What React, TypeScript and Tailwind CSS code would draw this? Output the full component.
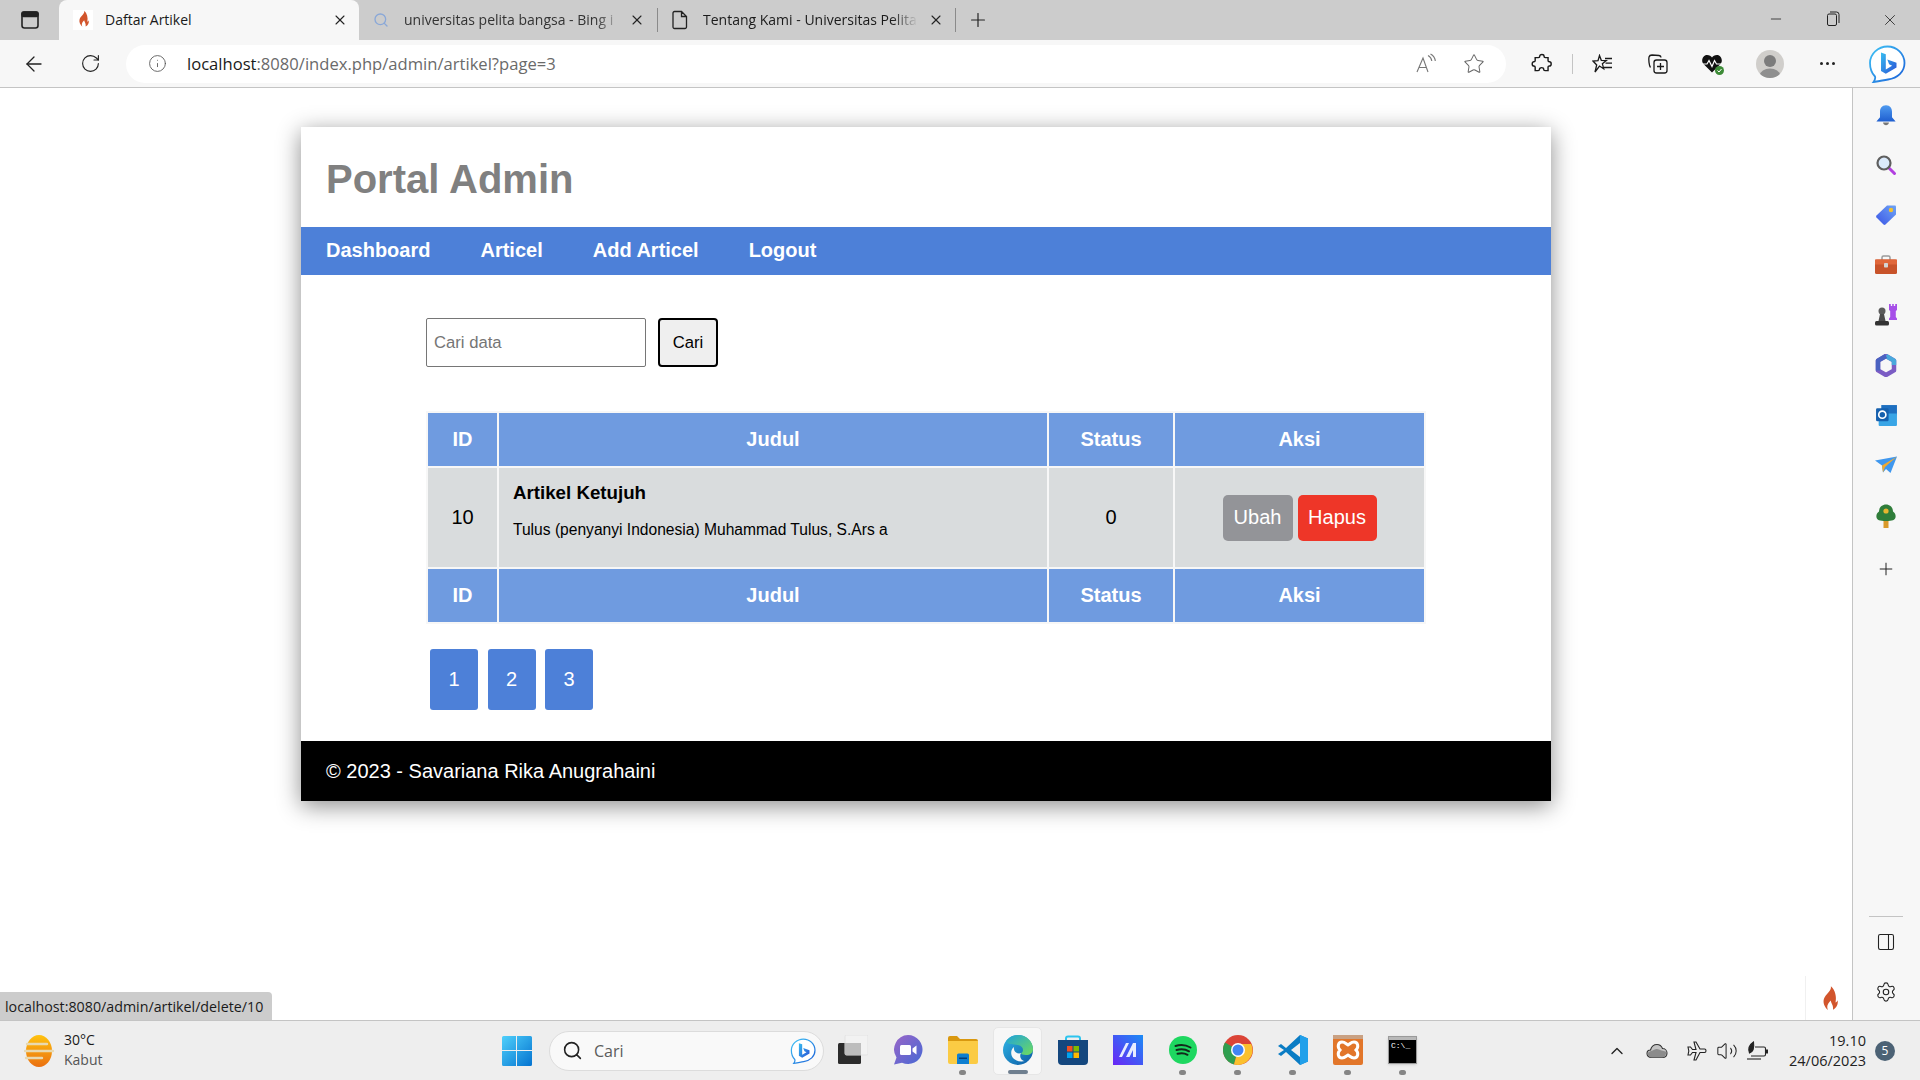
import { ArrowLeft, ChevronUp, Info, Minus, PanelRight, Plus, RotateCw, Search, Settings, Star, Volume2, X } from 'lucide-react';

const uiFont = 'font-["Open_Sans",sans-serif]';

const Flame = ({ size = 22 }: { size?: number }) => (
  <svg width={size} height={size} viewBox="0 0 20 24">
    <path
      fill="#d2552c"
      d="M11.500 1c.8 4-4.300 6-5.600 10.200-.9 3 .6 6.600 3.300 8.800-1.500-3.300.3-5.500 2.200-7.600.2 2.200 2.300 3.600 1.800 7.400 2.800-1.500 4.300-4.500 3.700-7.600-.3 1-1 1.600-1.700 1.800C16.200 9.500 15 4 11.500 1z"
    />
  </svg>
);

const BingLogo = ({ size = 38 }: { size?: number }) => (
  <svg width={size} height={size} viewBox="0 0 38 38">
    <defs>
      <linearGradient id="bingRing" x1="0" y1="0" x2="1" y2="1">
        <stop offset="0" stopColor="#3fc3f5" />
        <stop offset="1" stopColor="#1a5fd8" />
      </linearGradient>
      <linearGradient id="bingB" x1="0" y1="0" x2="1" y2="1">
        <stop offset="0" stopColor="#37bdf0" />
        <stop offset="1" stopColor="#2a52d6" />
      </linearGradient>
    </defs>
    <path
      d="M19.500 1.500C29 1.500 36.500 9 36.500 18S29.500 33 20 34.500c-4 .6-9 1.500-14.500 2.500 1.500-2 2-4 1.500-5.500C3.500 28 2 23 2 18 2 9 10 1.500 19.500 1.500z"
      fill="#fff"
      stroke="url(#bingRing)"
      strokeWidth="1.800"
    />
    <path
      d="M13 7.500l4.800 1.700v15.200l6.300-3.700-3-1.500-1.800-4.600 9.200 3.200v4.800l-10.700 6.200-4.800-2.700z"
      fill="url(#bingB)"
    />
  </svg>
);

const PageIcon = () => (
  <svg width="18" height="20" viewBox="0 0 18 20" fill="none" stroke="#222" strokeWidth="1.300">
    <path d="M3.500 1.500h7l5 5v10.500a1.500 1.500 0 0 1-1.500 1.500H3.500A1.500 1.500 0 0 1 2 17V3a1.500 1.500 0 0 1 1.500-1.500zM10.500 1.500v5h5" />
  </svg>
);

const TabsIcon = () => (
  <svg width="20" height="20" viewBox="0 0 20 20" fill="none" stroke="#222" strokeWidth="1.600">
    <rect x="2" y="2" width="16" height="16" rx="2.500" />
    <rect x="2" y="2" width="16" height="4.500" rx="1.500" fill="#222" />
  </svg>
);

const RestoreIcon = () => (
  <svg width="14" height="16" viewBox="0 0 14 16" fill="none" stroke="#222" strokeWidth="1">
    <rect x="1.500" y="3" width="9" height="11.500" rx="1.500" />
    <path d="M4 1h6.500A2.500 2.500 0 0 1 13 3.500V12" />
  </svg>
);

const ReadAloudIcon = () => (
  <svg width="22" height="22" viewBox="0 0 22 22" fill="none" stroke="#777" strokeWidth="1.100">
    <path d="M2 19L8 5l5 14M4.200 14.500h7.500" />
    <path d="M13 2.500c2 1 3.500 3 3.800 5.500M15.500 1c3 1.500 4.500 4 4.800 7" />
  </svg>
);

const PuzzleIcon = () => (
  <svg width="22" height="22" viewBox="0 0 20 20" fill="none" stroke="#1a1a1a" strokeWidth="1.300">
    <path d="M8 2.800c0-2 3.800-2 3.800 0 0 1 .2 1.400 1.200 1.400h2.500v2.600c0 1 .5 1.200 1.200 1.200 2.200 0 2.200 3.800 0 3.800-.8 0-1.200.3-1.200 1.200v3h-2.800c-1 0-1.200-.5-1.200-1.200 0-2-3.800-2-3.800 0 0 .8-.3 1.200-1.200 1.200H3.800v-3c0-.8-.4-1.200-1.200-1.200C.6 11.800.6 8 2.600 8c.8 0 1.200-.4 1.200-1.200V4.200h3c.9 0 1.200-.4 1.200-1.400z" />
  </svg>
);

const FavoritesIcon = () => (
  <svg width="22" height="20" viewBox="0 0 22 20" fill="none" stroke="#1a1a1a" strokeWidth="1.300">
    <path d="M7.500 1.500l1.800 4.800 5 .3-3.900 3.200 1.300 4.900-4.200-2.700-4.500 6 1.700-7L1 7l5-.4z" />
    <path d="M13 4.500h7M13.500 9.200h6.500M12 13.500h8" />
  </svg>
);

const CollectionsIcon = () => (
  <svg width="22" height="22" viewBox="0 0 22 22" fill="none" stroke="#1a1a1a" strokeWidth="1.300">
    <path d="M3.500 14.500C2 13 1.500 6 2 4c.4-1.500 1.500-2 3-2l7 .5c1.300.2 2 1 2 2" />
    <rect x="7" y="7" width="13" height="13" rx="2.500" />
    <path d="M13.500 10v7M10 13.500h7" />
  </svg>
);

const HeartIcon = () => (
  <svg width="24" height="24" viewBox="0 0 24 24">
    <path d="M11 20.500L2.500 12C-.5 8.500 2 3 6 3c2.500 0 4 1 5 2.500C12 4 13.500 3 16 3c4 0 6.500 5.500 3.500 9z" fill="#111" />
    <path d="M1 12h5l2-3.500 3 6 2.500-6 2 3.500h6" fill="none" stroke="#fff" strokeWidth="1.200" />
    <circle cx="18.500" cy="18.500" r="4.500" fill="#3d8b37" />
    <path d="M16.500 18.500l1.500 1.500 2.500-3" fill="none" stroke="#fff" strokeWidth="1" />
  </svg>
);

const AvatarIcon = () => (
  <div className="flex h-[28px] w-[28px] items-center justify-center overflow-hidden rounded-full bg-[#d0cecb]">
    <svg width="28" height="28" viewBox="0 0 28 28">
      <circle cx="14" cy="11" r="6" fill="#7c7c7c" />
      <ellipse cx="14" cy="25" rx="10" ry="6.500" fill="#8f8f8f" />
    </svg>
  </div>
);

const SideBell = () => (
  <svg width="24" height="24" viewBox="0 0 20 20" className="mt-[2px]">
    <defs>
      <linearGradient id="bellG" x1="0" y1="0" x2="0" y2="1">
        <stop offset="0" stopColor="#4f9bf0" />
        <stop offset="1" stopColor="#1f5fd0" />
      </linearGradient>
    </defs>
    <path d="M10 1c3.500 0 5 2.500 5 5.500V11l3 3.500H2L5 11V6.500C5 3.500 6.500 1 10 1z" fill="url(#bellG)" />
    <path d="M7.500 15.500h5c-.5 3-4.500 3-5 0z" fill="#777" />
  </svg>
);

const SideSearch = () => (
  <svg width="22" height="22" viewBox="0 0 22 22">
    <path d="M13.500 13.500l6 6" stroke="#b23fe0" strokeWidth="3" strokeLinecap="round" />
    <circle cx="9" cy="9" r="6.500" fill="#dbeafb" stroke="#5f5f5f" strokeWidth="2.200" />
  </svg>
);

const SideTag = () => (
  <svg width="22" height="22" viewBox="0 0 22 22">
    <defs>
      <linearGradient id="tagG" x1="0" y1="1" x2="1" y2="0">
        <stop offset="0" stopColor="#3b55e6" />
        <stop offset="1" stopColor="#6ea4f5" />
      </linearGradient>
    </defs>
    <path d="M12 1.500h8a1 1 0 0 1 1 1v8L10.500 20.500a1.500 1.500 0 0 1-2 0l-7-7a1.500 1.500 0 0 1 0-2z" fill="url(#tagG)" />
    <circle cx="16" cy="6" r="2.200" fill="#f2c230" />
  </svg>
);

const SideTools = () => (
  <svg width="24" height="20" viewBox="0 0 24 20">
    <path d="M8 5V2.500C8 1.700 8.700 1 9.500 1h5c.8 0 1.500.7 1.500 1.500V5" fill="none" stroke="#9a9a9a" strokeWidth="1.500" />
    <rect x="1" y="4.500" width="22" height="14.500" rx="1.500" fill="#c8532a" />
    <rect x="1" y="4.500" width="22" height="5" fill="#e0673a" />
    <rect x="10" y="8" width="4" height="4.500" rx=".8" fill="#d4d4d4" />
  </svg>
);

const SideChess = () => (
  <svg width="24" height="24" viewBox="0 0 24 24">
    <path d="M15 1h1.800v2h1.400V1h1.600v2h1.400V1H23v6l-1.200 1v6l1.200 1.500v1.500h-8v-1.500l1.200-1.500V8L15 7z" fill="#a64fe8" />
    <circle cx="8" cy="8" r="3.500" fill="#5c5c5c" />
    <path d="M6 11h4l1.500 7H4.500z" fill="#4d4d4d" />
    <rect x="1" y="18" width="14" height="4.500" rx="1.500" fill="#333" />
  </svg>
);

const SideM365 = () => (
  <svg width="22" height="23" viewBox="0 0 22 23">
    <path d="M11 2l8 4.600v9.800L11 21l-8-4.600V6.600z" fill="none" stroke="#7b5cc4" strokeWidth="4.500" strokeLinejoin="round" />
    <path d="M11 2l8 4.600v4.500" fill="none" stroke="#49a8dc" strokeWidth="4.500" strokeLinejoin="round" />
    <path d="M3 16.400V6.600L11 2" fill="none" stroke="#4a62c0" strokeWidth="4.500" strokeLinejoin="round" />
  </svg>
);

const SideOutlook = () => (
  <svg width="23" height="23" viewBox="0 0 22 22">
    <rect x="6" y="1" width="15" height="10" fill="#1e6fc0" />
    <path d="M3.500 9H21v11a1 1 0 0 1-1 1H4.500a1 1 0 0 1-1-1z" fill="#39a5e6" />
    <rect x="1" y="4" width="12" height="12.500" rx="1.200" fill="#1560ae" />
    <circle cx="7" cy="10.200" r="3.400" fill="none" stroke="#fff" strokeWidth="1.600" />
  </svg>
);

const SideSend = () => (
  <svg width="22" height="18" viewBox="0 0 22 18">
    <path d="M0 4.500L22 .5 15.500 17 11 13l-3 3.500-1-7z" fill="#3f97ee" />
    <path d="M22 .5L7 9.500l1 7 2-5.500z" fill="#f0a92f" />
  </svg>
);

const SideTree = () => (
  <svg width="20" height="24" viewBox="0 0 20 24" className="mt-[2px]">
    <rect x="7.500" y="15" width="5" height="9" fill="#d99a2b" />
    <path d="M10 .5c4 0 7 3 7 7 2 1.500 3 3.500 2.500 6-.5 2.500-3 3.500-9.500 3.500S1 16 .5 13.500C0 11 1 9 3 7.500c0-4 3-7 7-7z" fill="#2f7d3a" />
    <circle cx="10" cy="7" r="2.600" fill="#e8b52f" />
  </svg>
);

const SidebarButton = ({ children }: { children: React.ReactNode }) => (
  <div className="flex h-[50px] w-full items-center justify-center">{children}</div>
);

const WeatherIcon = () => (
  <svg width="30" height="34" viewBox="0 0 30 34">
    <defs>
      <linearGradient id="sunG" x1="0" y1="0" x2="0" y2="1">
        <stop offset="0" stopColor="#ffc30f" />
        <stop offset="1" stopColor="#ea6f10" />
      </linearGradient>
    </defs>
    <ellipse cx="15" cy="17" rx="13" ry="16" fill="url(#sunG)" />
    <path d="M3 10h20M1 17h17M6 17h23M2 24h16" stroke="#e8d9b0" strokeWidth="2.400" strokeLinecap="round" />
  </svg>
);

const WinLogo = () => (
  <svg width="30" height="30" viewBox="0 0 30 30">
    <defs>
      <linearGradient id="winG" x1="0" y1="0" x2="1" y2="1">
        <stop offset="0" stopColor="#4fd0fb" />
        <stop offset="1" stopColor="#0473d0" />
      </linearGradient>
    </defs>
    <path d="M1.500 0H14v14H0V1.500A1.500 1.500 0 0 1 1.500 0zM15 0h13.500A1.500 1.500 0 0 1 30 1.500V14H15zM0 15h14v15H1.500A1.500 1.500 0 0 1 0 28.500zM15 15h15v13.500a1.500 1.500 0 0 1-1.500 1.500H15z" fill="url(#winG)" />
  </svg>
);

const TaskView = () => (
  <svg width="30" height="30" viewBox="0 0 30 30">
    <rect x="0" y="8" width="23" height="21" rx="1.500" fill="#2b2b2b" />
    <rect x="7" y="0" width="23" height="20" rx="1.500" fill="#f2f2f2" fillOpacity=".85" stroke="#e2e2e2" />
    <rect x="7" y="8" width="16" height="12" fill="#bdbdbd" />
  </svg>
);

const MeetIcon = () => (
  <svg width="30" height="30" viewBox="0 0 30 30">
    <defs>
      <linearGradient id="meetG" x1="0" y1="0" x2="1" y2="1">
        <stop offset="0" stopColor="#9a66c8" />
        <stop offset="1" stopColor="#4668d4" />
      </linearGradient>
    </defs>
    <path d="M15 0a14.500 14.500 0 1 1-6 27.700L1 29.500l2.500-7A14.500 14.500 0 0 1 15 0z" fill="url(#meetG)" />
    <rect x="7" y="10" width="11" height="10" rx="1.500" fill="#fff" />
    <path d="M19.500 13.500l4-3v9l-4-3z" fill="#fff" />
  </svg>
);

const ExplorerIcon = () => (
  <svg width="30" height="28" viewBox="0 0 30 28">
    <path d="M0 2a2 2 0 0 1 2-2h7l3 3h16a2 2 0 0 1 2 2v4H0z" fill="#d9980f" />
    <path d="M0 5h30v21a2 2 0 0 1-2 2H2a2 2 0 0 1-2-2z" fill="#fbcb44" />
    <path d="M9 19a1.500 1.500 0 0 1 1.500-1.500h9A1.500 1.500 0 0 1 21 19v9H9z" fill="#0f7fd0" />
    <rect x="11" y="21.500" width="8" height="1.500" fill="#063f7a" />
  </svg>
);

const EdgeIcon = () => (
  <svg width="30" height="30" viewBox="0 0 30 30">
    <defs>
      <linearGradient id="edgeA" x1="0" y1="0" x2="1" y2="1">
        <stop offset="0" stopColor="#2fb7e6" />
        <stop offset="1" stopColor="#0c59a4" />
      </linearGradient>
      <linearGradient id="edgeB" x1="0" y1="0" x2="1" y2="1">
        <stop offset="0" stopColor="#1fa2dc" />
        <stop offset="1" stopColor="#6fdc5c" />
      </linearGradient>
    </defs>
    <circle cx="15" cy="15" r="15" fill="url(#edgeA)" />
    <path d="M3 6C6 2 10 0 15 0c8 0 15 6 15 14 0 4-3 6-7 6-3 0-5-1-5-2 3-1 3-7-3-8C10 9 5 10 3 6z" fill="url(#edgeB)" />
    <path d="M18 18c-3 1.500-8-1-7-6-3 2-4 7-1 11 3 3 7 4 12 3-4 0-6-5-4-8z" fill="#f7f7f7" />
  </svg>
);

const StoreIcon = () => (
  <svg width="30" height="30" viewBox="0 0 30 30">
    <path d="M8 7V3.500A2 2 0 0 1 10 1.500h10a2 2 0 0 1 2 2V7" fill="none" stroke="#2cc4ee" strokeWidth="2" />
    <path d="M0 5h30v21a4 4 0 0 1-4 4H4a4 4 0 0 1-4-4z" fill="#14477e" />
    <rect x="9" y="11" width="5.500" height="5.500" fill="#f25022" />
    <rect x="15.500" y="11" width="5.500" height="5.500" fill="#7fba00" />
    <rect x="9" y="17.500" width="5.500" height="5.500" fill="#00a4ef" />
    <rect x="15.500" y="17.500" width="5.500" height="5.500" fill="#ffb900" />
  </svg>
);

const MAppIcon = () => (
  <svg width="30" height="30" viewBox="0 0 30 30">
    <defs>
      <linearGradient id="mG" x1="0" y1="1" x2="1" y2="0">
        <stop offset="0" stopColor="#6a25f5" />
        <stop offset="1" stopColor="#1b8cf5" />
      </linearGradient>
    </defs>
    <rect width="30" height="30" fill="url(#mG)" />
    <path d="M6 22l7-14h3L9 22zM13 22l7-14h3v14h-3v-7l-3.500 7z" fill="#e8ecff" />
  </svg>
);

const SpotifyIcon = () => (
  <svg width="28" height="28" viewBox="0 0 28 28">
    <circle cx="14" cy="14" r="14" fill="#1ed760" />
    <path d="M6.500 10c5-1.500 10.500-1 15 1.500M7.500 14c4.500-1.200 9-.8 12.500 1.300M8.500 17.800c3.700-1 7.200-.7 10 1" fill="none" stroke="#13291b" strokeWidth="2" strokeLinecap="round" />
  </svg>
);

const ChromeIcon = () => (
  <svg width="30" height="30" viewBox="0 0 30 30">
    <circle cx="15" cy="15" r="15" fill="#db4437" />
    <path d="M15 15L2 7.500A15 15 0 0 0 11 29.500z" fill="#2f9e4f" />
    <path d="M15 9h13.200A15 15 0 0 1 11 29.500L15 15z" fill="#fbc02d" />
    <circle cx="15" cy="15" r="7" fill="#fff" />
    <circle cx="15" cy="15" r="5.500" fill="#4285f4" />
  </svg>
);

const VsCodeIcon = () => (
  <svg width="30" height="30" viewBox="0 0 30 30">
    <path d="M22 0l8 3.500v23L22 30 8 17l-5 4-3-2 6-4-6-4 3-2 5 4z" fill="#0a7cc4" />
    <path d="M22 0l8 3.500v23L22 30z" fill="#21a0ea" />
    <path d="M22 8v14l-9-7z" fill="#eeeeee" />
  </svg>
);

const XamppIcon = () => (
  <svg width="30" height="30" viewBox="0 0 30 30">
    <rect width="30" height="30" rx="2" fill="#e2762a" />
    <rect x="0" y="0" width="30" height="4" fill="#c9a183" />
    <path d="M9 7c3 0 4 2 6 3 2-1 3-3 6-3 4 0 5 5 2 8 3 3 2 8-2 8-3 0-4-2-6-3-2 1-3 3-6 3-4 0-5-5-2-8-3-3-2-8 2-8z" fill="none" stroke="#fff" strokeWidth="3" />
  </svg>
);

const TerminalIcon = () => (
  <div className="flex h-[28px] w-[29px] flex-col border border-[#9a9a9a] bg-black shadow-sm">
    <div className="h-[3px] bg-[#b8b8b8]" />
    <span className="pl-[2px] font-['Liberation_Mono',monospace] text-[8px] leading-[12px] text-white">C:\_</span>
  </div>
);

const OneDriveIcon = () => (
  <svg width="22" height="16" viewBox="0 0 22 16">
    <path d="M5.500 14.500C2.500 14.500 1 12.500 1 10.500S2.500 7 4.500 7C5.500 3.500 8 1.500 11 1.500c2.500 0 4.500 1.500 5.500 4C19 5.500 21 7.500 21 10s-1.500 4.500-4.500 4.500z" fill="#c4c4c4" stroke="#333" strokeWidth="1.100" />
    <path d="M5 8c3-1 5-3 8-1.500 2 1 5 1.500 7.500 2.500-.5 3-2 5-4 5.500h-11C3 14 1.500 12 1.500 10.500 2.500 9 3.500 8.500 5 8z" fill="#8b8b8b" />
  </svg>
);

const PlaneIcon = () => (
  <svg width="20" height="20" viewBox="0 0 20 20" fill="none" stroke="#222" strokeWidth="1.100">
    <path d="M7 1h2l4 7h4.500c2 0 2 3.500 0 3.500H13l-4 7.500H7l2-7.500H5.500L3.500 14H1l.8-4-.8-4h2.500l2 2.500H9z" />
  </svg>
);

const BatteryIcon = () => (
  <svg width="22" height="20" viewBox="0 0 22 20" fill="none" stroke="#222" strokeWidth="1.100">
    <path d="M9 6h9a1.500 1.500 0 0 1 1.500 1.500v6A1.500 1.500 0 0 1 18 15H5" />
    <path d="M20 9h1.500v3H20" fill="#222" />
    <path d="M7.500 1C3 4 2 8 3.500 12c3-1 5-4 4-11z" fill="#222" />
    <path d="M1 18h14" />
  </svg>
);

const columns = ['ID', 'Judul', 'Status', 'Aksi'];

const HeadRow = () => (
  <tr>
    {columns.map((t) => (
      <th key={t} className="bg-[#6f9be0] pb-[2px] text-center text-[20px] font-bold text-white">
        {t}
      </th>
    ))}
  </tr>
);

export default function App() {
  const sideIcons = [
    <SideBell />,
    <SideSearch />,
    <SideTag />,
    <SideTools />,
    <SideChess />,
    <SideM365 />,
    <SideOutlook />,
    <SideSend />,
    <SideTree />,
    <Plus size={20} strokeWidth={1.2} color="#222" className="mt-[8px]" />,
  ];
  const apps = [
    { icon: <TaskView /> },
    { icon: <MeetIcon /> },
    { icon: <ExplorerIcon />, dot: true },
    { icon: <EdgeIcon />, active: true },
    { icon: <StoreIcon /> },
    { icon: <MAppIcon /> },
    { icon: <SpotifyIcon />, dot: true },
    { icon: <ChromeIcon />, dot: true },
    { icon: <VsCodeIcon />, dot: true },
    { icon: <XamppIcon />, dot: true },
    { icon: <TerminalIcon />, dot: true },
  ];

  return (
    <div className={`flex h-screen w-screen flex-col overflow-hidden bg-white ${uiFont}`}>
      {/* Browser tab strip */}
      <div className="flex h-10 shrink-0 items-center bg-[#cccccc]">
        <div className="flex w-[59px] items-center justify-center">
          <TabsIcon />
        </div>
        <div className="flex h-10 w-[300px] items-center rounded-t-lg bg-[#f7f7f7] pl-[14px]">
          <span className="flex h-5 w-5 items-center justify-center bg-white">
            <Flame size={20} />
          </span>
          <span className="ml-[12px] flex-1 pb-[2px] text-[14px] text-[#1a1a1a]">Daftar Artikel</span>
          <X size={16} strokeWidth={1.6} color="#222" className="mr-[11px]" />
        </div>
        <div className="flex h-6 w-[299px] items-center border-r border-[#8a8a8a] pl-[14px]">
          <Search size={16} strokeWidth={2} color="#8aa8d8" />
          <span className="ml-[15px] w-[218px] pb-[2px] text-[14px] whitespace-nowrap text-[#333] [mask-image:linear-gradient(to_right,black_88%,transparent)]">
            universitas pelita bangsa - Bing i
          </span>
          <X size={16} strokeWidth={1.6} color="#222" className="ml-[7px]" />
        </div>
        <div className="flex h-6 w-[298px] items-center border-r border-[#8a8a8a] pl-[13px]">
          <PageIcon />
          <span className="ml-[14px] w-[215px] pb-[2px] text-[14px] whitespace-nowrap text-[#1a1a1a] [mask-image:linear-gradient(to_right,black_88%,transparent)]">
            Tentang Kami - Universitas Pelita
          </span>
          <X size={16} strokeWidth={1.6} color="#222" className="ml-[10px]" />
        </div>
        <Plus size={22} strokeWidth={1.3} color="#222" className="ml-[11px]" />
        <div className="ml-auto flex pr-[2px]">
          <div className="flex w-[57px] justify-center">
            <Minus size={16} strokeWidth={1.2} color="#222" />
          </div>
          <div className="flex w-[57px] justify-center">
            <RestoreIcon />
          </div>
          <div className="flex w-[57px] justify-center">
            <X size={18} strokeWidth={1.1} color="#222" />
          </div>
        </div>
      </div>

      {/* Address bar row */}
      <div className="flex h-12 shrink-0 items-center border-b border-[#c4c4c4] bg-[#f7f7f7]">
        <div className="flex w-[68px] justify-center">
          <ArrowLeft size={24} strokeWidth={1.3} color="#222" />
        </div>
        <div className="flex w-[44px] justify-center">
          <RotateCw size={21} strokeWidth={1.3} color="#222" />
        </div>
        <div className="ml-[14px] flex h-[38px] w-[1380px] items-center rounded-full bg-white pl-[22px]">
          <Info size={19} strokeWidth={1.1} color="#555" />
          <span className="ml-[20px] pt-[2px] text-[16.6px] text-[#6a6a6a]">
            <span className="text-[#1a1a1a]">localhost</span>:8080/index.php/admin/artikel?page=3
          </span>
          <div className="ml-auto flex items-center">
            <div className="flex w-[50px] justify-center">
              <ReadAloudIcon />
            </div>
            <div className="flex w-[48px] justify-center pr-[2px]">
              <Star size={22} strokeWidth={1.1} color="#666" />
            </div>
            <div className="w-[7px]" />
          </div>
        </div>
        <div className="ml-2 flex w-[56px] justify-center">
          <PuzzleIcon />
        </div>
        <div className="ml-[2px] h-5 w-px bg-[#c4c4c4]" />
        <div className="flex w-[60px] justify-center">
          <FavoritesIcon />
        </div>
        <div className="flex w-[50px] justify-center">
          <CollectionsIcon />
        </div>
        <div className="flex w-[60px] justify-center">
          <HeartIcon />
        </div>
        <div className="flex w-[54px] justify-center">
          <AvatarIcon />
        </div>
        <div className="flex w-[60px] justify-center gap-[3px]">
          <span className="h-[3px] w-[3px] rounded-full bg-[#222]" />
          <span className="h-[3px] w-[3px] rounded-full bg-[#222]" />
          <span className="h-[3px] w-[3px] rounded-full bg-[#222]" />
        </div>
        <div className="flex w-[60px] justify-center">
          <BingLogo />
        </div>
      </div>

      <div className="flex min-h-0 flex-1">
        {/* Page viewport */}
        <div className="relative flex-1 overflow-hidden bg-white pt-[39px] font-['Liberation_Sans',Arial,sans-serif]">
          <div className="mx-auto w-[1250px] bg-white shadow-[0_5px_22px_rgba(0,0,0,0.45)]">
            <header className="flex h-[100px] items-center px-[25px] pt-[3px]">
              <h1 className="text-[40px] leading-none font-bold text-[#808080]">Portal Admin</h1>
            </header>
            <nav className="flex h-12 items-center bg-[#4d80d8] pb-[2px]">
              {['Dashboard', 'Articel', 'Add Articel', 'Logout'].map((item) => (
                <a key={item} className="px-[25px] text-[20px] font-bold text-white">
                  {item}
                </a>
              ))}
            </nav>
            <section className="px-[125px] pt-[43px] pb-[31px]">
              <form className="flex gap-3">
                <input
                  placeholder="Cari data"
                  className="h-[49px] w-[220px] rounded-[2px] border border-[#767676] px-[7px] text-[16.67px] placeholder:text-[#757575]"
                />
                <button
                  type="button"
                  className="h-[49px] w-[60px] rounded-[4px] border-2 border-black bg-[#efefef] text-[16.67px] text-black"
                >
                  Cari
                </button>
              </form>
              <table className="mt-[44px] w-[1000px] table-fixed border-separate border-spacing-[2px] bg-[#f7f7f7]">
                <colgroup>
                  <col className="w-[69px]" />
                  <col className="w-[548px]" />
                  <col className="w-[124px]" />
                  <col />
                </colgroup>
                <thead className="[&_tr]:h-[53px]">
                  <HeadRow />
                </thead>
                <tbody>
                  <tr className="h-[99px] bg-[#d9dcdd] text-[20px] text-black">
                    <td className="pb-[2px] text-center">10</td>
                    <td className="pl-[14px] align-top">
                      <div className="pt-[13px] text-[18.72px] leading-[24px] font-bold">Artikel Ketujuh</div>
                      <p className="pt-[16px] text-[15.6px] leading-[18px]">
                        Tulus (penyanyi Indonesia) Muhammad Tulus, S.Ars a
                      </p>
                    </td>
                    <td className="pb-[2px] text-center">0</td>
                    <td>
                      <div className="flex justify-center gap-[5px]">
                        <a className="flex h-[46px] w-[70px] items-center justify-center rounded-[5px] bg-[#939498] pb-[2px] text-white">
                          Ubah
                        </a>
                        <a className="flex h-[46px] w-[79px] items-center justify-center rounded-[5px] bg-[#ee3628] pb-[2px] text-white">
                          Hapus
                        </a>
                      </div>
                    </td>
                  </tr>
                </tbody>
                <tfoot className="[&_tr]:h-[53px]">
                  <HeadRow />
                </tfoot>
              </table>
              <div className="mt-[25px] flex gap-[9.5px] pl-1">
                {['1', '2', '3'].map((n) => (
                  <a
                    key={n}
                    className="flex h-[61px] w-[48px] items-center justify-center rounded-[3px] bg-[#4d80d8] pb-[2px] text-[20px] text-white"
                  >
                    {n}
                  </a>
                ))}
              </div>
            </section>
            <footer className="flex h-[60px] items-center bg-black px-[25px] text-[20px] text-white">
              © 2023 - Savariana Rika Anugrahaini
            </footer>
          </div>

          {/* Link preview bubble and extension badge over the page */}
          <div className={`absolute bottom-0 left-0 flex h-[28px] w-[272px] items-center rounded-tr-[4px] bg-[#cccccc] pt-[2px] pl-[5px] text-[14.25px] text-[#1a1a1a] ${uiFont}`}>
            localhost:8080/admin/artikel/delete/10
          </div>
          <div className="absolute right-0 bottom-0 flex h-[44px] w-[47px] items-center justify-center border-l border-[#f0f0f0] bg-white pt-[4px]">
            <Flame size={30} />
          </div>
        </div>

        {/* Edge sidebar */}
        <aside className="flex w-[68px] shrink-0 flex-col items-center border-l border-[#c4c4c4] bg-[#f7f7f7] pt-[2px] pr-px pb-[3px]">
          {sideIcons.map((icon, i) => (
            <SidebarButton key={i}>{icon}</SidebarButton>
          ))}
          <div className="mt-auto h-px w-[34px] bg-[#c4c4c4]" />
          <SidebarButton>
            <PanelRight size={20} strokeWidth={1.3} color="#222" />
          </SidebarButton>
          <SidebarButton>
            <Settings size={22} strokeWidth={1.2} color="#222" />
          </SidebarButton>
        </aside>
      </div>

      {/* Windows taskbar */}
      <div className="flex h-[60px] shrink-0 items-center border-t border-[#c4c4c4] bg-[#eeeeee]">
        <div className="flex w-[502px] items-center pl-[24px]">
          <WeatherIcon />
          <div className="ml-[10px] flex flex-col pb-[2px] text-[14px] leading-[20px]">
            <span className="text-[#1a1a1a]">30°C</span>
            <span className="text-[#555]">Kabut</span>
          </div>
        </div>
        <WinLogo />
        <div className="ml-[17px] flex h-10 w-[275px] items-center rounded-full border border-[#dcdcdc] bg-[#f9f9f9] pr-[7px] pl-[12px]">
          <Search size={21} strokeWidth={1.8} color="#222" />
          <span className="ml-[11px] flex-1 text-[16px] text-[#5c5c5c]">Cari</span>
          <BingLogo size={26} />
        </div>
        <div className="ml-[1px] flex">
          {apps.map((a, i) => (
            <div key={i} className="relative flex h-[48px] w-[55px] items-center justify-center pb-[2px]">
              {a.active && (
                <div className="absolute inset-x-[3px] inset-y-0 rounded-[5px] border border-[#e6e6e6] bg-[#f7f7f7]" />
              )}
              <div className="relative">{a.icon}</div>
              {a.dot && <div className="absolute bottom-0 h-[5px] w-[7px] rounded-full bg-[#858585]" />}
              {a.active && <div className="absolute bottom-[1px] h-[4px] w-[20px] rounded-full bg-[#6f7f8f]" />}
            </div>
          ))}
        </div>
        <div className="ml-auto flex items-center pr-[25px] text-[#222]">
          <ChevronUp size={20} strokeWidth={1.6} />
          <div className="ml-[5px] flex w-[50px] justify-center">
            <OneDriveIcon />
          </div>
          <div className="flex w-[30px] justify-center">
            <PlaneIcon />
          </div>
          <div className="flex w-[30px] justify-center">
            <Volume2 size={22} strokeWidth={1.1} />
          </div>
          <div className="flex w-[30px] justify-center">
            <BatteryIcon />
          </div>
          <div className="ml-[16px] flex w-[78px] flex-col items-end text-[14.5px] leading-[20px]">
            <span>19.10</span>
            <span>24/06/2023</span>
          </div>
          <div className="ml-[9px] flex h-5 w-5 items-center justify-center rounded-full bg-[#4c6275] text-[12px] text-white">
            5
          </div>
        </div>
      </div>
    </div>
  );
}
